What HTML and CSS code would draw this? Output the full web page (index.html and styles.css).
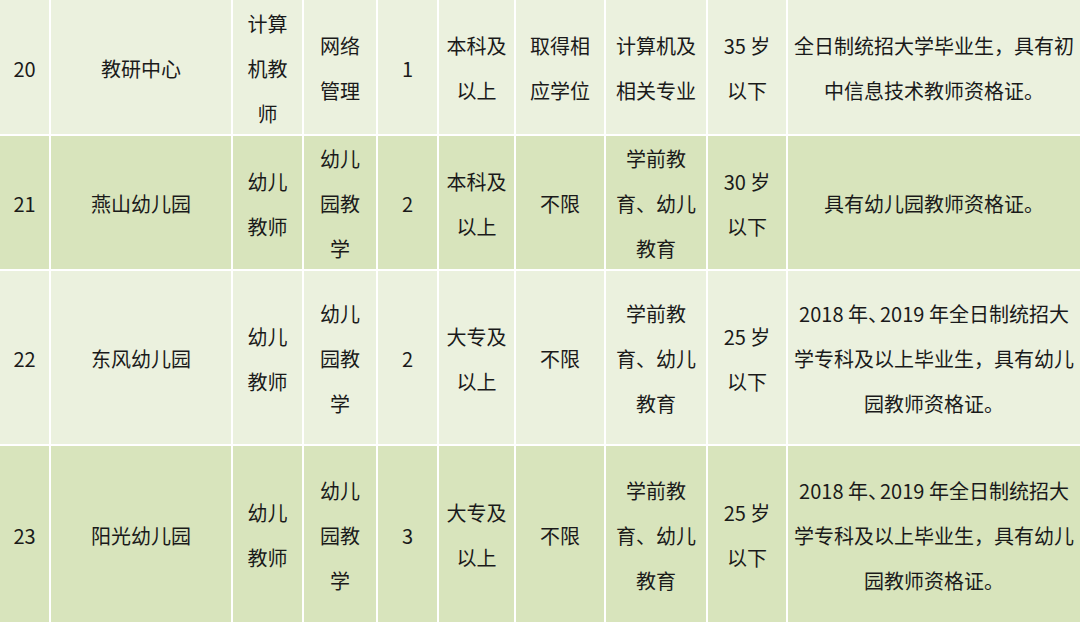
FILE: index.html
```html
<!DOCTYPE html>
<html lang="zh">
<head>
<meta charset="utf-8">
<link rel="stylesheet" href="styles.css">
</head>
<body>
<div class="table">
  <div class="row light r20">
    <div class="cell">20</div>
    <div class="cell">教研中心</div>
    <div class="cell">计算<br>机教<br>师</div>
    <div class="cell">网络<br>管理</div>
    <div class="cell">1</div>
    <div class="cell">本科及<br>以上</div>
    <div class="cell">取得相<br>应学位</div>
    <div class="cell">计算机及<br>相关专业</div>
    <div class="cell">35 岁<br>以下</div>
    <div class="cell">全日制统招大学毕业生，具有初<br>中信息技术教师资格证。</div>
  </div>
  <div class="row dark">
    <div class="cell">21</div>
    <div class="cell">燕山幼儿园</div>
    <div class="cell">幼儿<br>教师</div>
    <div class="cell">幼儿<br>园教<br>学</div>
    <div class="cell">2</div>
    <div class="cell">本科及<br>以上</div>
    <div class="cell">不限</div>
    <div class="cell">学前教<br>育、幼儿<br>教育</div>
    <div class="cell">30 岁<br>以下</div>
    <div class="cell">具有幼儿园教师资格证。</div>
  </div>
  <div class="row light">
    <div class="cell">22</div>
    <div class="cell">东风幼儿园</div>
    <div class="cell">幼儿<br>教师</div>
    <div class="cell">幼儿<br>园教<br>学</div>
    <div class="cell">2</div>
    <div class="cell">大专及<br>以上</div>
    <div class="cell">不限</div>
    <div class="cell">学前教<br>育、幼儿<br>教育</div>
    <div class="cell">25 岁<br>以下</div>
    <div class="cell"><span class="txt">2018 年<span class="tight">、</span>2019 年全日制统招大<br>学专科及以上毕业生，具有幼儿<br>园教师资格证。</span></div>
  </div>
  <div class="row dark">
    <div class="cell">23</div>
    <div class="cell">阳光幼儿园</div>
    <div class="cell">幼儿<br>教师</div>
    <div class="cell">幼儿<br>园教<br>学</div>
    <div class="cell">3</div>
    <div class="cell">大专及<br>以上</div>
    <div class="cell">不限</div>
    <div class="cell">学前教<br>育、幼儿<br>教育</div>
    <div class="cell">25 岁<br>以下</div>
    <div class="cell"><span class="txt">2018 年<span class="tight">、</span>2019 年全日制统招大<br>学专科及以上毕业生，具有幼儿<br>园教师资格证。</span></div>
  </div>
</div>
</body>
</html>
```
FILE: styles.css
```css
html, body {
  margin: 0;
  padding: 0;
  background: #ffffff;
}
body {
  width: 1080px;
  height: 622px;
  overflow: hidden;
  font-family: "Noto Sans CJK SC", "Noto Sans", sans-serif;
  font-size: 20px;
  color: #1a1a1a;
}
.table {
  display: grid;
  grid-template-columns: 49px 180px 69px 72px 59px 75px 88px 100px 78px 292px;
  grid-template-rows: 134px 133px 173px 176px;
  gap: 2px;
  background: #ffffff;
}
.row {
  display: contents;
}
.cell {
  display: flex;
  align-items: center;
  justify-content: center;
  text-align: center;
  line-height: 45px;
  padding-top: 2px;
  white-space: nowrap;
}
.txt {
  display: block;
}
.tight {
  letter-spacing: -8px;
}
.light .cell {
  background: #ebf1de;
}
.dark .cell {
  background: #d8e4bc;
}
```
